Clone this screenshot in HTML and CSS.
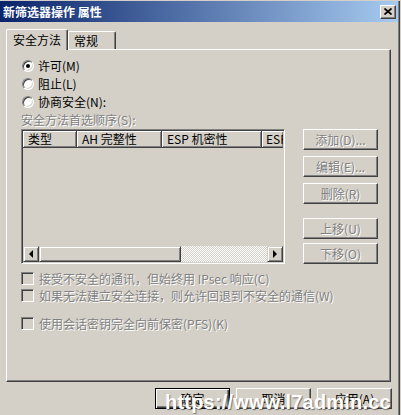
FILE: index.html
```html
<!DOCTYPE html>
<html lang="zh-CN">
<head>
  <meta charset="UTF-8" />
  <title>新筛选器操作 属性</title>
  <link rel="stylesheet" href="styles.css">
</head>
<body>

  <div class="window">
    <!-- Title bar -->
    <div class="titlebar">
      <span class="title">新筛选器操作 属性</span>
      <span class="close">
        <svg width="8" height="7" viewBox="0 0 8 7">
          <path d="M0.5 0.5 L7.5 6.5 M7.5 0.5 L0.5 6.5" stroke="#000" stroke-width="1.7" fill="none" />
        </svg>
      </span>
    </div>

    <!-- Tabs -->
    <div class="tabs">
      <div class="tab active">安全方法</div>
      <div class="tab">常规</div>
    </div>

    <div class="panel">
      <div class="radios">
        <div class="opt"><span class="radio on"></span>许可(M)</div>
        <div class="opt"><span class="radio"></span>阻止(L)</div>
        <div class="opt"><span class="radio"></span>协商安全(N):</div>
      </div>

      <div class="caption off">安全方法首选顺序(S):</div>

      <div class="list-row">
        <div class="listview">
          <div class="lv-header">
            <div class="col c1">类型</div>
            <div class="col c2">AH 完整性</div>
            <div class="col c3">ESP 机密性</div>
            <div class="col c4">ESP 完整性</div>
          </div>
          <div class="lv-body"></div>
          <div class="hscroll">
            <span class="sb-btn"><span class="arrow-left"></span></span>
            <span class="sb-thumb"></span>
            <span class="sb-track"></span>
            <span class="sb-btn"><span class="arrow-right"></span></span>
          </div>
        </div>

        <div class="side-buttons">
          <button class="btn" disabled>添加(D)...</button>
          <button class="btn" disabled>编辑(E)...</button>
          <button class="btn" disabled>删除(R)</button>
          <button class="btn gap-big" disabled>上移(U)</button>
          <button class="btn gap-small" disabled>下移(O)</button>
        </div>
      </div>

      <div class="checks">
        <div class="opt off"><span class="check"></span>接受不安全的通讯，但始终用 IPsec 响应(C)</div>
        <div class="opt off"><span class="check"></span>如果无法建立安全连接，则允许回退到不安全的通信(W)</div>
        <div class="opt off pfs"><span class="check"></span>使用会话密钥完全向前保密(PFS)(K)</div>
      </div>
    </div>

    <div class="footer">
      <button class="btn default">确定</button>
      <button class="btn">取消</button>
      <button class="btn">应用(A)</button>
    </div>

    <div class="watermark">https://www.l7admin.cc</div>
  </div>

</body>
</html>
```

FILE: styles.css
```css
body {
  margin: 0;
  background: #d4d0c8;
  color: #000;
  font-family: "Noto Sans CJK SC", sans-serif;
  font-size: 12px;
  line-height: 14px;
}

.window {
  position: relative;
  width: 398px;
  height: 415px;
  border-right: 1px solid #808080;
  box-shadow: 1px 0 0 #404040;
}

/* title bar */
.titlebar {
  margin-top: 1px;
  height: 21px;
  display: flex;
  align-items: center;
  justify-content: space-between;
  background: linear-gradient(to right, #0a246a, #a6caf0);
  padding: 0 2px 0 3px;
}

.title {
  color: #fff;
  font-weight: bold;
}

.close {
  width: 16px;
  height: 14px;
  box-sizing: border-box;
  display: flex;
  align-items: center;
  justify-content: center;
  background: #d4d0c8;
  border: 1px solid;
  border-color: #fff #404040 #404040 #fff;
  box-shadow: inset -1px -1px 0 #808080;
}

/* tabs */
.tabs {
  display: flex;
  align-items: flex-end;
  margin-top: 7px;
  padding-left: 6px;
}

.tab {
  box-sizing: border-box;
  height: 18px;
  padding: 0 17px 0 5px;
  line-height: 17px;
  background: #d4d0c8;
  border-left: 1px solid #fff;
  border-top: 1px solid #fff;
  border-right: 1px solid #404040;
  border-radius: 2px 2px 0 0;
  box-shadow: inset -1px 0 0 #808080;
}

.tab.active {
  position: relative;
  z-index: 1;
  height: 21px;
  margin-bottom: -1px;
  padding: 0 6px;
  line-height: 20px;
}

.panel {
  box-sizing: border-box;
  width: 385px;
  height: 333px;
  margin-left: 6px;
  padding: 7px 0 0 14px;
  border: 1px solid;
  border-color: #fff #404040 #404040 #fff;
  box-shadow: inset -1px -1px 0 #808080;
}

.opt {
  display: flex;
  align-items: center;
  height: 18px;
}

.radios .opt {
  padding-left: 1px;
}

.radio {
  box-sizing: border-box;
  position: relative;
  width: 12px;
  height: 12px;
  margin-right: 4px;
  border-radius: 50%;
  background: #fff;
  border: 1px solid;
  border-color: #808080 #fff #fff #808080;
  box-shadow: inset 1px 1px 0 #404040, inset -1px -1px 0 #d4d0c8;
}

.radio.on::after {
  content: "";
  position: absolute;
  left: 3px;
  top: 3px;
  width: 4px;
  height: 4px;
  border-radius: 50%;
  background: #000;
}

.off {
  color: #808080;
  text-shadow: 1px 1px 0 #fff;
}

.caption {
  margin-top: 2px;
}

/* list + buttons */
.list-row {
  display: flex;
  gap: 18px;
  margin-top: 2px;
}

.listview {
  box-sizing: border-box;
  width: 264px;
  height: 135px;
  display: flex;
  flex-direction: column;
  border: 1px solid;
  border-color: #808080 #fff #fff #808080;
  box-shadow: inset 1px 1px 0 #404040, inset -1px -1px 0 #d4d0c8;
  padding: 1px;
}

.lv-header {
  display: flex;
  height: 17px;
  overflow: hidden;
}

.col {
  box-sizing: border-box;
  flex-shrink: 0;
  padding-left: 5px;
  line-height: 16px;
  white-space: nowrap;
  overflow: hidden;
  border-right: 1px solid #404040;
  border-bottom: 1px solid #404040;
  box-shadow: inset 1px 1px 0 #fff, inset -1px -1px 0 #808080;
}

.c1 { width: 54px; }
.c2 { width: 85px; }
.c3 { width: 100px; }
.c4 { width: 21px; border-right: none; padding-left: 4px; }

.lv-body {
  flex: 1;
}

.hscroll {
  display: flex;
  height: 16px;
}

.sb-btn,
.sb-thumb {
  box-sizing: border-box;
  height: 16px;
  background: #d4d0c8;
  border: 1px solid;
  border-color: #d4d0c8 #404040 #404040 #d4d0c8;
  box-shadow: inset 1px 1px 0 #fff, inset -1px -1px 0 #808080;
}

.sb-btn {
  width: 16px;
  display: flex;
  align-items: center;
  justify-content: center;
}

.sb-thumb {
  width: 142px;
}

.sb-track {
  flex: 1;
  background-image: conic-gradient(#fff 25%, #d4d0c8 0 50%, #fff 0 75%, #d4d0c8 0);
  background-size: 2px 2px;
}

.arrow-left {
  border-top: 4px solid transparent;
  border-bottom: 4px solid transparent;
  border-right: 4px solid #000;
}

.arrow-right {
  border-top: 4px solid transparent;
  border-bottom: 4px solid transparent;
  border-left: 4px solid #000;
}

.side-buttons {
  display: flex;
  flex-direction: column;
  gap: 6px;
}

.btn {
  box-sizing: border-box;
  width: 75px;
  height: 21px;
  padding: 0;
  font-family: inherit;
  font-size: 12px;
  line-height: 14px;
  color: #000;
  background: #d4d0c8;
  border: 1px solid;
  border-color: #fff #404040 #404040 #fff;
  box-shadow: inset -1px -1px 0 #808080;
}

.btn:disabled {
  color: #808080;
  text-shadow: 1px 1px 0 #fff;
}

.gap-big { margin-top: 8px; }
.gap-small { margin-top: -2px; }

.checks {
  margin-top: 6px;
}

.checks .opt {
  height: 17px;
}

.checks .pfs {
  margin-top: 11px;
}

.check {
  box-sizing: border-box;
  width: 13px;
  height: 13px;
  margin-right: 5px;
  background: #d4d0c8;
  border: 1px solid;
  border-color: #808080 #fff #fff #808080;
  box-shadow: inset 1px 1px 0 #404040, inset -1px -1px 0 #d4d0c8;
}

/* bottom buttons */
.footer {
  display: flex;
  justify-content: flex-end;
  gap: 6px;
  margin-top: 6px;
  padding-right: 6px;
}

.btn.default {
  border-color: #000;
  box-shadow: inset 1px 1px 0 #fff, inset -1px -1px 0 #404040, inset -2px -2px 0 #808080;
}

.watermark {
  position: absolute;
  left: 165px;
  top: 391px;
  font-family: "Liberation Sans", sans-serif;
  font-weight: bold;
  font-size: 20px;
  line-height: 20px;
  letter-spacing: 0.2px;
  color: #fff;
  text-shadow: 1px 1px 1px rgba(0, 0, 0, 0.45);
  white-space: nowrap;
}
```
